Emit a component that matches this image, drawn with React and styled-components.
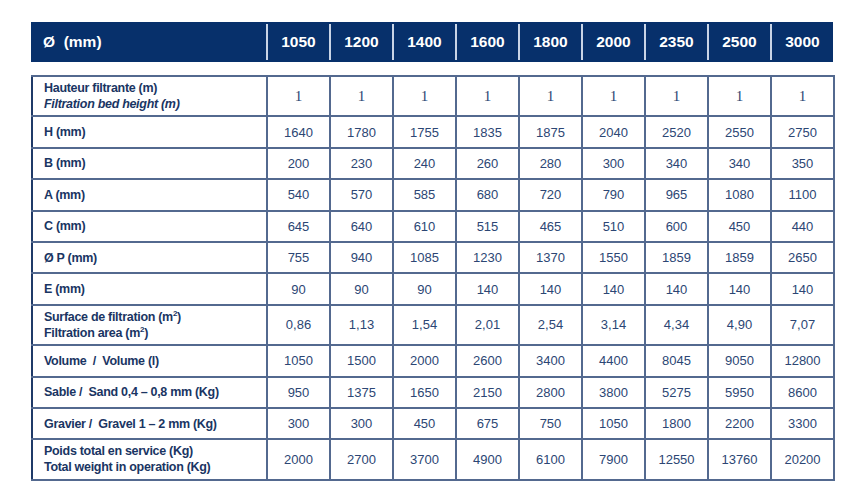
import React from 'react';
import styled, { createGlobalStyle } from 'styled-components';

const GlobalStyle = createGlobalStyle`
  body {
    margin: 0;
    background: #ffffff;
    font-family: 'Liberation Sans', Arial, sans-serif;
  }
`;

const sizes = ['1050', '1200', '1400', '1600', '1800', '2000', '2350', '2500', '3000'];

const rows = [
  { label: 'Hauteur filtrante (m)', sub: 'Filtration bed height (m)', italic: true, tall: true, serif: true, values: ['1', '1', '1', '1', '1', '1', '1', '1', '1'] },
  { label: 'H (mm)', values: ['1640', '1780', '1755', '1835', '1875', '2040', '2520', '2550', '2750'] },
  { label: 'B (mm)', values: ['200', '230', '240', '260', '280', '300', '340', '340', '350'] },
  { label: 'A (mm)', values: ['540', '570', '585', '680', '720', '790', '965', '1080', '1100'] },
  { label: 'C (mm)', values: ['645', '640', '610', '515', '465', '510', '600', '450', '440'] },
  { label: 'Ø P (mm)', values: ['755', '940', '1085', '1230', '1370', '1550', '1859', '1859', '2650'] },
  { label: 'E (mm)', values: ['90', '90', '90', '140', '140', '140', '140', '140', '140'] },
  { label: <>Surface de filtration (m<sup>2</sup>)</>, sub: <>Filtration area (m<sup>2</sup>)</>, tall: true, values: ['0,86', '1,13', '1,54', '2,01', '2,54', '3,14', '4,34', '4,90', '7,07'] },
  { label: 'Volume  /  Volume (l)', values: ['1050', '1500', '2000', '2600', '3400', '4400', '8045', '9050', '12800'] },
  { label: 'Sable /  Sand 0,4 – 0,8 mm (Kg)', values: ['950', '1375', '1650', '2150', '2800', '3800', '5275', '5950', '8600'] },
  { label: 'Gravier /  Gravel 1 – 2 mm (Kg)', values: ['300', '300', '450', '675', '750', '1050', '1800', '2200', '3300'] },
  { label: 'Poids total en service (Kg)', sub: 'Total weight in operation (Kg)', tall: true, values: ['2000', '2700', '3700', '4900', '6100', '7900', '12550', '13760', '20200'] },
];

const Page = styled.div`
  padding: 22px 0 0 31px;
  width: 802px;
`;

const HeadBar = styled.div`
  display: grid;
  grid-template-columns: 235px repeat(9, 63px);
  height: 40px;
  padding: 2px 0;
  box-sizing: border-box;
  background: #07306b;
  margin-bottom: 13px;
`;

const HeadCell = styled.div`
  display: flex;
  align-items: center;
  justify-content: ${p => (p.$first ? 'flex-start' : 'center')};
  padding-left: ${p => (p.$first ? '12px' : '0')};
  border-left: ${p => (p.$first ? 'none' : '2px solid #c9d4e6')};
  color: #ffffff;
  font-weight: bold;
  font-size: 15.5px;
  white-space: pre;
`;

const Table = styled.table`
  border-collapse: collapse;
  table-layout: fixed;
  width: 802px;
  border: 2px solid #1f3a68;
`;

const LabelCol = styled.col`
  width: 235px;
`;

const ValueCol = styled.col`
  width: 63px;
`;

const Row = styled.tr`
  height: ${p => (p.$tall ? '40.4px' : '31.4px')};
`;

const Label = styled.td`
  padding: 0 0 0 11px;
  border: 2px solid #53698f;
  border-left-color: #1f3a68;
  color: #1a3563;
  font-weight: bold;
  font-size: 12.5px;
  letter-spacing: -0.3px;
  line-height: 16px;
  white-space: pre;
  overflow: hidden;

  sup {
    font-size: 8px;
    line-height: 0;
    vertical-align: 5px;
  }
`;

const Sub = styled.div`
  font-style: ${p => (p.$italic ? 'italic' : 'normal')};
`;

const Value = styled.td`
  padding: 0;
  border: 2px solid #53698f;
  text-align: center;
  color: #2c4674;
  font-family: ${p => (p.$serif ? "'Liberation Serif', 'Times New Roman', serif" : "'Liberation Sans', Arial, sans-serif")};
  font-size: ${p => (p.$serif ? '15px' : '13px')};
`;

export default function App() {
  return (
    <>
      <GlobalStyle />
      <Page>
        <HeadBar>
          <HeadCell $first>{'Ø  (mm)'}</HeadCell>
          {sizes.map(s => (
            <HeadCell key={s}>{s}</HeadCell>
          ))}
        </HeadBar>
        <Table>
          <colgroup>
            <LabelCol />
            {sizes.map(s => (
              <ValueCol key={s} />
            ))}
          </colgroup>
          <tbody>
            {rows.map((r, i) => (
              <Row key={i} $tall={r.tall}>
                <Label>
                  <div>{r.label}</div>
                  {r.sub && <Sub $italic={r.italic}>{r.sub}</Sub>}
                </Label>
                {r.values.map((v, j) => (
                  <Value key={j} $serif={r.serif}>{v}</Value>
                ))}
              </Row>
            ))}
          </tbody>
        </Table>
      </Page>
    </>
  );
}
